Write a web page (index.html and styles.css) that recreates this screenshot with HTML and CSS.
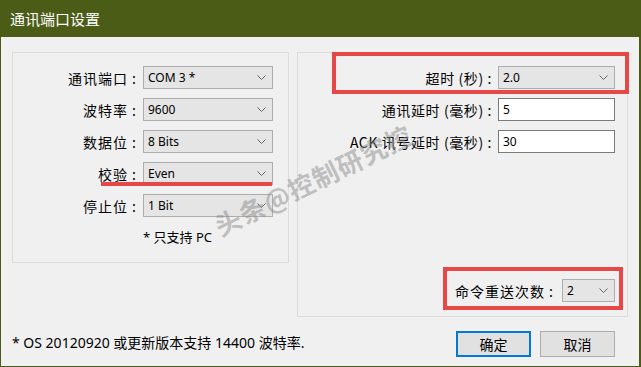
FILE: index.html
```html
<!DOCTYPE html>
<html lang="zh-CN">
  <head>
    <meta charset="UTF-8" />
    <meta name="viewport" content="width=device-width, initial-scale=1.0" />
    <title>通讯端口设置</title>
    <link rel="stylesheet" href="styles.css">
  </head>
  <body>
    <div class="window">
      <div class="titlebar">通讯端口设置</div>

      <div class="client">
        <div class="groups">
          <div class="group group-serial">
            <div class="row">
              <label class="label">通讯端口 :</label>
              <div class="combo"><span>COM 3 *</span><svg width="9" height="5" viewBox="0 0 9 5"><polyline points="0.5,0.5 4.5,4.5 8.5,0.5" /></svg></div>
            </div>
            <div class="row">
              <label class="label">波特率 :</label>
              <div class="combo"><span>9600</span><svg width="9" height="5" viewBox="0 0 9 5"><polyline points="0.5,0.5 4.5,4.5 8.5,0.5" /></svg></div>
            </div>
            <div class="row">
              <label class="label">数据位 :</label>
              <div class="combo"><span>8 Bits</span><svg width="9" height="5" viewBox="0 0 9 5"><polyline points="0.5,0.5 4.5,4.5 8.5,0.5" /></svg></div>
            </div>
            <div class="row">
              <label class="label">校验 :</label>
              <div class="combo"><span>Even</span><svg width="9" height="5" viewBox="0 0 9 5"><polyline points="0.5,0.5 4.5,4.5 8.5,0.5" /></svg></div>
            </div>
            <div class="row">
              <label class="label">停止位 :</label>
              <div class="combo"><span>1 Bit</span><svg width="9" height="5" viewBox="0 0 9 5"><polyline points="0.5,0.5 4.5,4.5 8.5,0.5" /></svg></div>
            </div>
            <div class="note">* 只支持 PC</div>
          </div>

          <div class="group group-timing">
            <div class="row">
              <label class="label">超时 (秒) :</label>
              <div class="combo"><span>2.0</span><svg width="9" height="5" viewBox="0 0 9 5"><polyline points="0.5,0.5 4.5,4.5 8.5,0.5" /></svg></div>
            </div>
            <div class="row">
              <label class="label">通讯延时 (毫秒) :</label>
              <div class="field">5</div>
            </div>
            <div class="row">
              <label class="label">ACK 讯号延时 (毫秒) :</label>
              <div class="field">30</div>
            </div>
            <div class="row row-retry">
              <label class="label">命令重送次数 :</label>
              <div class="combo combo-small"><span>2</span><svg width="9" height="5" viewBox="0 0 9 5"><polyline points="0.5,0.5 4.5,4.5 8.5,0.5" /></svg></div>
            </div>
          </div>
        </div>

        <div class="footer">
          <span class="footnote">* OS 20120920 或更新版本支持 14400 波特率.</span>
          <div class="buttons">
            <button class="btn btn-default">确定</button>
            <button class="btn">取消</button>
          </div>
        </div>
      </div>

      <!-- annotations drawn over the dialog -->
      <div class="mark mark-timeout"></div>
      <div class="mark mark-retry"></div>
      <div class="underline"></div>
      <div class="watermark">头条@控制研究控</div>
    </div>
  </body>
</html>
```

FILE: styles.css
```css
* {
  box-sizing: border-box;
}

body {
  margin: 0;
  background-color: #4b5c17;
  font-family: "Noto Sans", "Noto Sans CJK SC", sans-serif;
  color: #000;
}

.window {
  position: relative;
  width: 641px;
  height: 367px;
  display: flex;
  flex-direction: column;
  overflow: hidden;
}

.titlebar {
  height: 37px;
  padding-left: 10px;
  display: flex;
  align-items: center;
  color: #fff;
  font-size: 15px;
  font-family: "Noto Sans CJK SC", sans-serif;
}

.client {
  flex: 1;
  margin: 0 2px 1px 1px;
  background-color: #f0f0f0;
  padding: 15px 11px 0 11px;
  display: flex;
  flex-direction: column;
}

.groups {
  display: flex;
  align-items: flex-start;
  gap: 8px;
}

.group {
  border: 1px solid #dcdcdc;
  display: flex;
  flex-direction: column;
  gap: 9px;
}

.group-serial {
  width: 277px;
  height: 211px;
  padding: 13px 0 0 0;
}

.group-timing {
  width: 331px;
  height: 265px;
  padding: 13px 12px 14px 0;
}

.row {
  display: flex;
  align-items: center;
  height: 23px;
  gap: 6px;
}

.label {
  font-family: "Noto Sans CJK SC", sans-serif;
  font-size: 14px;
  letter-spacing: 1px;
  text-align: right;
  white-space: nowrap;
}

.group-serial .label {
  width: 124px;
}

.group-timing .label {
  width: 194px;
  letter-spacing: 0.6px;
}

.combo,
.field {
  height: 23px;
  display: flex;
  align-items: center;
  justify-content: space-between;
  padding: 0 6px 0 4px;
  font-size: 12px;
}

.combo {
  background-color: #e5e5e5;
  border: 1px solid #adadad;
}

.combo svg polyline {
  fill: none;
  stroke: #666;
  stroke-width: 1;
}

.group-serial .combo {
  width: 130px;
}

.group-timing .combo,
.group-timing .field {
  width: 117px;
}

.field {
  background-color: #fff;
  border: 1px solid #7a7a7a;
}

.row-retry {
  margin-top: auto;
  justify-content: flex-end;
  gap: 8px;
}

.row-retry .label {
  width: auto;
  letter-spacing: 1px;
}

.group-timing .combo-small {
  width: 53px;
}

.note {
  margin: 3px 0 0 130px;
  font-size: 13px;
  line-height: 16px;
}

.footer {
  display: flex;
  align-items: center;
  justify-content: space-between;
  margin-top: 14px;
  padding-right: 13px;
}

.footnote {
  font-size: 14px;
  margin-top: -4px;
}

.buttons {
  display: flex;
  gap: 9px;
}

.btn {
  width: 75px;
  height: 26px;
  background-color: #e1e1e1;
  border: 1px solid #adadad;
  font-family: "Noto Sans CJK SC", sans-serif;
  font-size: 14px;
  padding: 0;
  color: #000;
}

.btn-default {
  border: 2px solid #0078d7;
}

.mark {
  position: absolute;
  border: 4px solid #e64848;
}

.mark-timeout {
  left: 332px;
  top: 52px;
  width: 297px;
  height: 42px;
}

.mark-retry {
  left: 443px;
  top: 267px;
  width: 180px;
  height: 43px;
}

.underline {
  position: absolute;
  left: 101px;
  top: 182px;
  width: 171px;
  height: 4px;
  background-color: #e64848;
}

.watermark {
  position: absolute;
  left: 216px;
  top: 214px;
  font-family: "Noto Sans CJK SC", sans-serif;
  font-weight: bold;
  font-size: 26px;
  letter-spacing: 1px;
  color: rgba(140, 140, 140, 0.5);
  transform: rotate(-26deg);
  transform-origin: 0 50%;
  white-space: nowrap;
  line-height: 1;
}
```
